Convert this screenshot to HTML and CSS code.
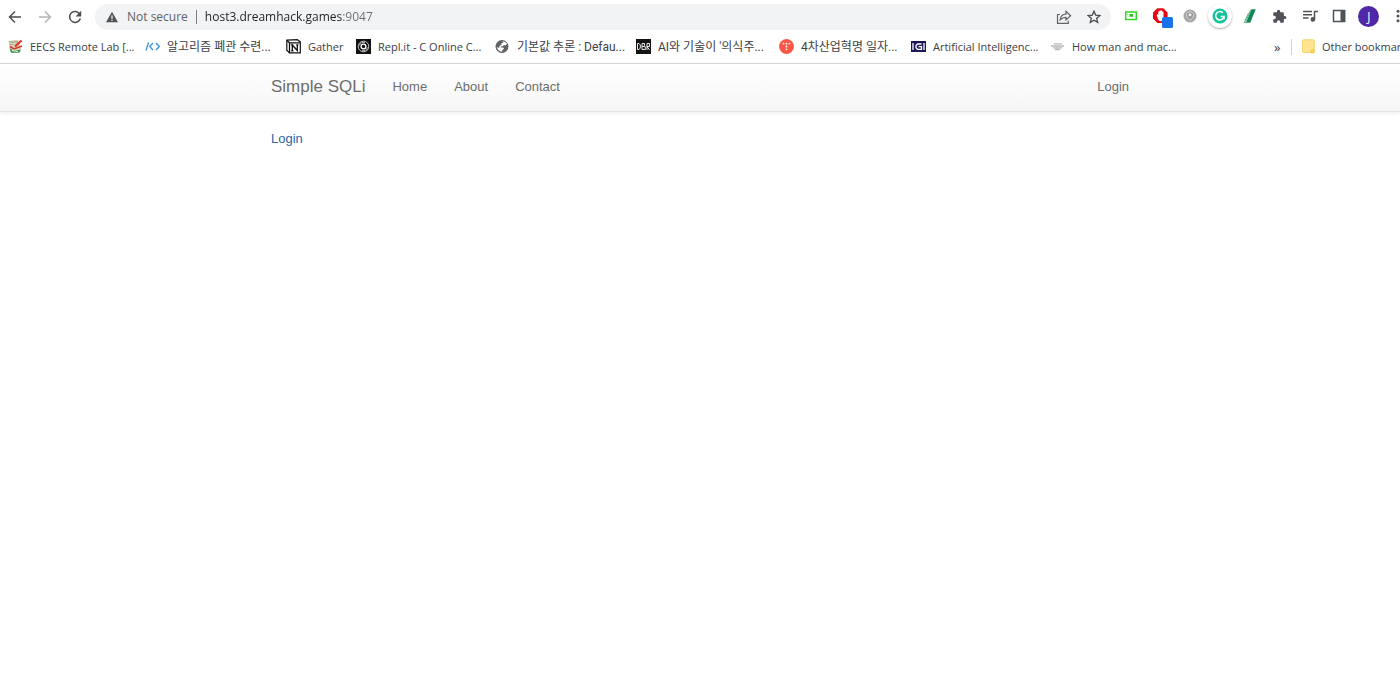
FILE: index.html
```html
<!DOCTYPE html>
<html lang="en">
<head>
<meta charset="utf-8">
<title>Simple SQLi</title>
<link rel="stylesheet" href="styles.css">
</head>
<body>
<header class="browser">
  <div class="toolbar">
    <div class="history">
      <button class="tool" aria-label="Back"><svg width="16" height="16" viewBox="0 0 16 16" fill="none" stroke="#4a4d51" stroke-width="1.5"><path d="M14 8H3M8 2.5 2.5 8 8 13.5"/></svg></button>
      <button class="tool" aria-label="Forward"><svg width="16" height="16" viewBox="0 0 16 16" fill="none" stroke="#b4b6b9" stroke-width="1.5"><path d="M2 8h11M8 2.5 13.5 8 8 13.5"/></svg></button>
      <button class="tool" aria-label="Reload"><svg width="16" height="16" viewBox="0 0 16 16"><path d="M12.8 5A5.5 5.5 0 1 0 13.4 9.5" fill="none" stroke="#4a4d51" stroke-width="1.5"/><path d="M14.2 1.8v5.700H8.600z" fill="#4a4d51"/></svg></button>
    </div>
    <div class="omnibox">
      <svg width="12" height="12" viewBox="0 0 12 12"><path d="M6 .8 12 11.3H0z" fill="#505357"/><path d="M6 4.3v3.6M6 8.8v1.3" stroke="#f1f3f4" stroke-width="1.2"/></svg>
      <label class="security" for="address">Not secure</label>
      <span class="divider"></span>
      <input class="address" id="address" type="text" value="host3.dreamhack.games:9047">
      <button class="tool" aria-label="Share"><svg width="16" height="16" viewBox="0 0 16 16" fill="none" stroke="#5f6368" stroke-width="1.2"><path d="M4 5.5H1.5v8.8h10.8v-2.5M4.2 10.8c.4-3.6 2.4-5.6 5.8-5.6V2.4l4.600 4.400L10 11V8.300c-2.500 0-4.200.700-5.800 2.500z"/></svg></button>
      <button class="tool" aria-label="Bookmark this page"><svg width="14" height="14" viewBox="0 0 14 14" fill="none" stroke="#4a4d51" stroke-width="1.3"><path d="m7 1.200 1.700 3.900 4.200.4-3.200 2.800.95 4.100L7 10.200l-3.650 2.200.95-4.100-3.200-2.800 4.200-.4z"/></svg></button>
    </div>
    <div class="extensions">
      <button class="tool" aria-label="Screen capture"><svg width="14" height="14" viewBox="0 0 14 14"><path d="M1.700 3h10.600v7.500H1.700z" fill="#fff" stroke="#35d62a" stroke-width="1.500"/><path d="M5.500 5h3.400v2.800H5.500z" fill="#22c51a"/><path d="M3.300 5.500h1" stroke="#35d62a"/></svg></button>
      <button class="tool" aria-label="Ad blocker"><svg width="24" height="24" viewBox="0 0 24 24"><path d="M8.300 4.200h6l4.300 4.200v6L14.300 19h-6L4 14.500v-6z" fill="#e50914"/><path d="M8.500 13.500c-1.200-1.800-.9-3.500.8-3.200V8c0-1 1.200-1 1.200 0V6.900c0-1 1.300-1 1.300 0V7c0-1 1.400-1 1.400 0v1.300c0-1 1.300-1 1.300 0v6c0 2-1.300 3-3 3-1.500 0-2.300-1.600-3-3.800z" fill="#fff"/><rect x="13" y="13" width="11" height="11" rx="1.500" fill="#1a73e8"/></svg></button>
      <button class="tool" aria-label="Location extension"><svg width="14" height="14" viewBox="0 0 14 14"><circle cx="7" cy="7" r="6.500" fill="#a6a6a6"/><path d="M7 11.500C5 9 3.300 7.500 3.300 5.600 3.300 1.800 10.700 1.800 10.700 5.600 10.700 7.500 9 9 7 11.500z" fill="#999" stroke="#ddd" stroke-width=".9"/><circle cx="7" cy="5.700" r="1.500" fill="#eee"/></svg></button>
      <button class="tool" aria-label="Writing assistant"><svg class="raised" width="24" height="24" viewBox="0 0 24 24"><circle cx="12" cy="12" r="11.300" fill="#fff"/><circle cx="12" cy="12" r="7.500" fill="#15c39a"/><path d="M14.800 8.800A4.200 4.200 0 1 0 16 12.500h-3.300M16 12.500v2.800" fill="none" stroke="#fff" stroke-width="1.500"/></svg></button>
      <button class="tool" aria-label="Notes extension"><svg width="14" height="16" viewBox="0 0 14 16"><path d="M8.500 1.200h4.200L7.500 14H3.300z" fill="#118653"/><path d="M7.500 2 3 13.500M5.500 5 1.300 14.500h6.300" fill="none" stroke="#5bae88"/></svg></button>
      <button class="tool" aria-label="Extensions"><svg width="15" height="15" viewBox="0 0 24 24" fill="#505357"><path d="M20.500 11H19V7a2 2 0 0 0-2-2h-4V3.500a2.500 2.500 0 0 0-5 0V5H4a2 2 0 0 0-2 2v3.800h1.500a2.700 2.700 0 0 1 0 5.400H2V20a2 2 0 0 0 2 2h3.800v-1.500a2.700 2.700 0 0 1 5.400 0V22H17a2 2 0 0 0 2-2v-4h1.500a2.500 2.500 0 0 0 0-5z"/></svg></button>
      <button class="tool" aria-label="Media controls"><svg width="16" height="14" viewBox="0 0 16 14"><path d="M1 2.500h9M1 5.800h9M1 9.100h5.500" stroke="#505357" stroke-width="1.500"/><path d="M12.500 10V2.500H16" fill="none" stroke="#505357" stroke-width="1.500"/><circle cx="10.900" cy="10.400" r="2.300" fill="#505357"/></svg></button>
      <button class="tool" aria-label="Side panel"><svg width="14" height="14" viewBox="0 0 14 14"><path d="M1.500 1.500h11v11h-11z" fill="#fff" stroke="#505357" stroke-width="1.500"/><path d="M8.500 1h4.800v12H8.500z" fill="#505357"/></svg></button>
      <button class="tool avatar" aria-label="Profile J">J</button>
      <button class="tool" aria-label="Menu"><svg width="4" height="14" viewBox="0 0 4 14" fill="#505357"><circle cx="2" cy="2.200" r="1.500"/><circle cx="2" cy="7" r="1.500"/><circle cx="2" cy="11.800" r="1.500"/></svg></button>
    </div>
  </div>
  <nav class="bookmarks" aria-label="Bookmarks">
    <a class="bookmark" href="#"><svg width="15" height="15" viewBox="0 0 15 15"><path d="M.5 2 10 .8l3.500 9L3 13.500z" fill="#d9d4b8"/><path d="M1 2.800h9M1.500 5.500h4M1.500 8h2" stroke="#a2a58b" stroke-width="1.200"/><path d="m7 7.500 6.500-6" stroke="#e0332b" stroke-width="2.200"/><path d="m2 7.500 4 2.500 8-3" fill="none" stroke="#d43a28" stroke-width="1.500"/><path d="M1.500 9c3 2.500 6 3 11.500 1.200l-1.500 3.500H3z" fill="#3a9450"/><path d="m4 11.500 6 1" stroke="#fff"/></svg><span>EECS Remote Lab [...</span></a>
    <a class="bookmark" href="#"><svg width="15" height="15" viewBox="0 0 15 15" fill="none" stroke="#3595d8" stroke-width="1.300"><path d="M3.500 3.500 1 11.500M8 4 4.700 7.500 8 11M11 4l3.300 3.500L11 11"/></svg><span lang="ko">알고리즘 폐관 수련...</span></a>
    <a class="bookmark" href="#"><svg width="15" height="15" viewBox="0 0 15 15"><path d="M.8 1.200 11.300.7l3 2.200v11H3.500L.8 11.300z" fill="#fff" stroke="#111" stroke-width="1.200"/><path d="m1 1.500 2.500 2.300H14M3.500 3.800V14" fill="none" stroke="#111" stroke-width="1.300"/><path d="M6.300 12V6l5 5.500v-6M5.200 6h2M5.200 11.800h2.200M10.200 5.800h2.200" fill="none" stroke="#111" stroke-width="1.300"/></svg><span>Gather</span></a>
    <a class="bookmark" href="#"><svg width="15" height="15" viewBox="0 0 15 15"><path d="M0 0h15v15H0z" fill="#111"/><circle cx="7.500" cy="7.500" r="5.300" fill="none" stroke="#ccc"/><circle cx="7.500" cy="7.500" r="2.400" fill="none" stroke="#fff" stroke-width="1.300"/><path d="M3.500 6.500C4 4 6.500 3 9 3.700M11.500 8.500c-.5 2.500-3 3.500-5.500 2.800" fill="none" stroke="#ddd" stroke-width=".8"/></svg><span>Repl.it - C Online C...</span></a>
    <a class="bookmark" href="#"><svg width="15" height="15" viewBox="0 0 15 15"><circle cx="7" cy="7.500" r="6.500" fill="#5f6368"/><path d="M7.300 2.200c2 0 3.800 1 4.700 2.500L10.500 6.500 8.800 6 8 7.200H5.800v1.300h2.500L9 10l-1.800 1v1.700c-3-.2-5-2.200-5.300-4.900l2.200 1.500.3-2L6.500 5.500V4h2z" fill="#fff"/></svg><span lang="ko">기본값 추론 : Defau...</span></a>
    <a class="bookmark" href="#"><svg width="15" height="15" viewBox="0 0 15 15"><path d="M0 0h15v15H0z" fill="#141414"/><path d="M1.500 4.500H3L4.300 6v3L3 10.500H1.500zM6 4.500h2.500v2.300L9.300 8v2.500H6zM6 7.500h2.500M11 11V4.500h2.500v3H11l2.500 3.500" fill="none" stroke="#fff" stroke-width=".9"/></svg><span lang="ko">AI와 기술이 '의식주...</span></a>
    <a class="bookmark" href="#"><svg width="15" height="15" viewBox="0 0 15 15"><circle cx="7.500" cy="7.500" r="7.400" fill="#ff5544"/><g fill="#fff"><circle cx="4.500" cy="4.700" r=".9"/><circle cx="7.500" cy="4.700" r=".9"/><circle cx="10.500" cy="4.700" r=".9"/><circle cx="7.500" cy="7.500" r=".9"/><circle cx="7.500" cy="10.300" r=".9"/></g></svg><span lang="ko">4차산업혁명 일자...</span></a>
    <a class="bookmark" href="#"><svg width="15" height="15" viewBox="0 0 15 15"><path d="M0 2h15v11H0z" fill="#1c1858"/><path d="M2 4v7M13 4v7M10.500 5H6.500L5 6.500v2.300l1.500 1.500h4V7.700h-3" fill="none" stroke="#fff" stroke-width="1.300"/></svg><span>Artificial Intelligenc...</span></a>
    <a class="bookmark" href="#"><svg width="15" height="15" viewBox="0 0 15 15" stroke="#b9b9b9" stroke-width="1.300"><path d="M4 4.800h8M1 7h13M3 8.800h9M5 10.500h5"/></svg><span>How man and mac...</span></a>
    <button class="more" aria-label="More bookmarks">»</button>
    <a class="bookmark other" href="#"><svg width="13" height="15" viewBox="0 0 13 15"><path d="M1.500.8H11q1.200 0 1.200 1.200v11.500H1.500Q.5 13.500.5 12.500V2Q.5.800 1.500.800z" fill="#ffe591" stroke="#f6d36b"/><path d="M9 13.800v-2q0-1.300 1.500-1.300h1.700v2q0 1.300-1.400 1.300z" fill="#ffdb62" stroke="#eec64f"/></svg><span>Other bookmarks</span></a>
  </nav>
</header>
<nav class="navbar" aria-label="Main">
  <div class="container">
    <a class="brand" href="#">Simple SQLi</a>
    <a class="link" href="#">Home</a>
    <a class="link" href="#">About</a>
    <a class="link" href="#">Contact</a>
    <a class="link login" href="#">Login</a>
  </div>
</nav>
<main class="container content">
  <a href="#">Login</a>
</main>
</body>
</html>
```

FILE: styles.css
```css
* { box-sizing: border-box; }
body {
  margin: 0;
  overflow-x: hidden;
  background: #fff;
  font: 13px/20px "Liberation Sans", Arial, sans-serif;
}
a { text-decoration: none; }
button {
  padding: 0;
  border: 0;
  background: none;
  font: inherit;
}
svg { display: block; flex: none; }

.browser {
  overflow: hidden;
  border-bottom: 1px solid #d6d7d9;
  font-family: "Open Sans", "Noto Sans CJK KR", sans-serif;
}
.toolbar {
  display: flex;
  align-items: center;
  height: 33px;
}
.history { display: flex; width: 95px; }
.tool {
  display: flex;
  align-items: center;
  justify-content: center;
  width: 30px;
  height: 26px;
}
.omnibox {
  display: flex;
  flex: 1;
  align-items: center;
  height: 26px;
  padding: 0 2px 0 11px;
  border-radius: 13px;
  background: #f1f3f4;
  font-size: 12px;
}
.security { margin-left: 9px; color: #5f6368; }
.divider {
  width: 1px;
  height: 14px;
  margin: 0 8px;
  background: #7c7f83;
}
.address {
  flex: 1;
  min-width: 0;
  padding: 0;
  border: 0;
  outline: 0;
  background: linear-gradient(90deg, #202124 137px, #6b6f73 137px) text;
  color: #202124;
  font: inherit;
  -webkit-text-fill-color: transparent;
}
.extensions {
  display: flex;
  width: 297px;
  margin: 0 -13px 0 5px;
}
.extensions .tool { flex: 1; }
.raised {
  border-radius: 50%;
  box-shadow: 0 1px 2px #aaa;
}
.extensions .avatar {
  flex: none;
  width: 21px;
  height: 21px;
  margin: 3px 4px;
  border-radius: 50%;
  background: #4f27a8;
  color: #fff;
  font-size: 12px;
}

.bookmarks {
  display: grid;
  grid-template-columns: 137px 141px 70px 139px 141px 143px 132px 139px 1fr 17px 122px;
  align-items: center;
  height: 30px;
  padding: 0 0 3px 8px;
  margin-right: -13px;
  font-size: 11px;
  line-height: 16px;
}
.bookmark {
  display: flex;
  align-items: center;
  gap: 7px;
  color: #3c4043;
  white-space: nowrap;
}
.bookmark [lang="ko"] {
  font-family: Roboto, "Noto Sans CJK KR", sans-serif;
  font-size: 12px;
}
.more { color: #3c4043; font-size: 13px; text-align: left; }
.other {
  padding-left: 10px;
  border-left: 1px solid #d0d2d5;
}

.navbar {
  border-bottom: 1px solid #e4e4e4;
  background: linear-gradient(#fff, #f6f6f6);
  box-shadow: 0 1px 4px rgba(0, 0, 0, .08);
}
.container {
  width: 100%;
  max-width: 886px;
  margin: 0 auto;
  padding: 0 14px;
}
.navbar .container {
  display: flex;
  align-items: center;
  gap: 27px;
  height: 47px;
  padding-bottom: 1px;
}
.brand { color: #6d6d6d; font-size: 17px; }
.link { color: #6d6d6d; }
.login { margin-left: auto; }
.content { padding-top: 17px; }
.content a { color: #2a67a5; }
```
